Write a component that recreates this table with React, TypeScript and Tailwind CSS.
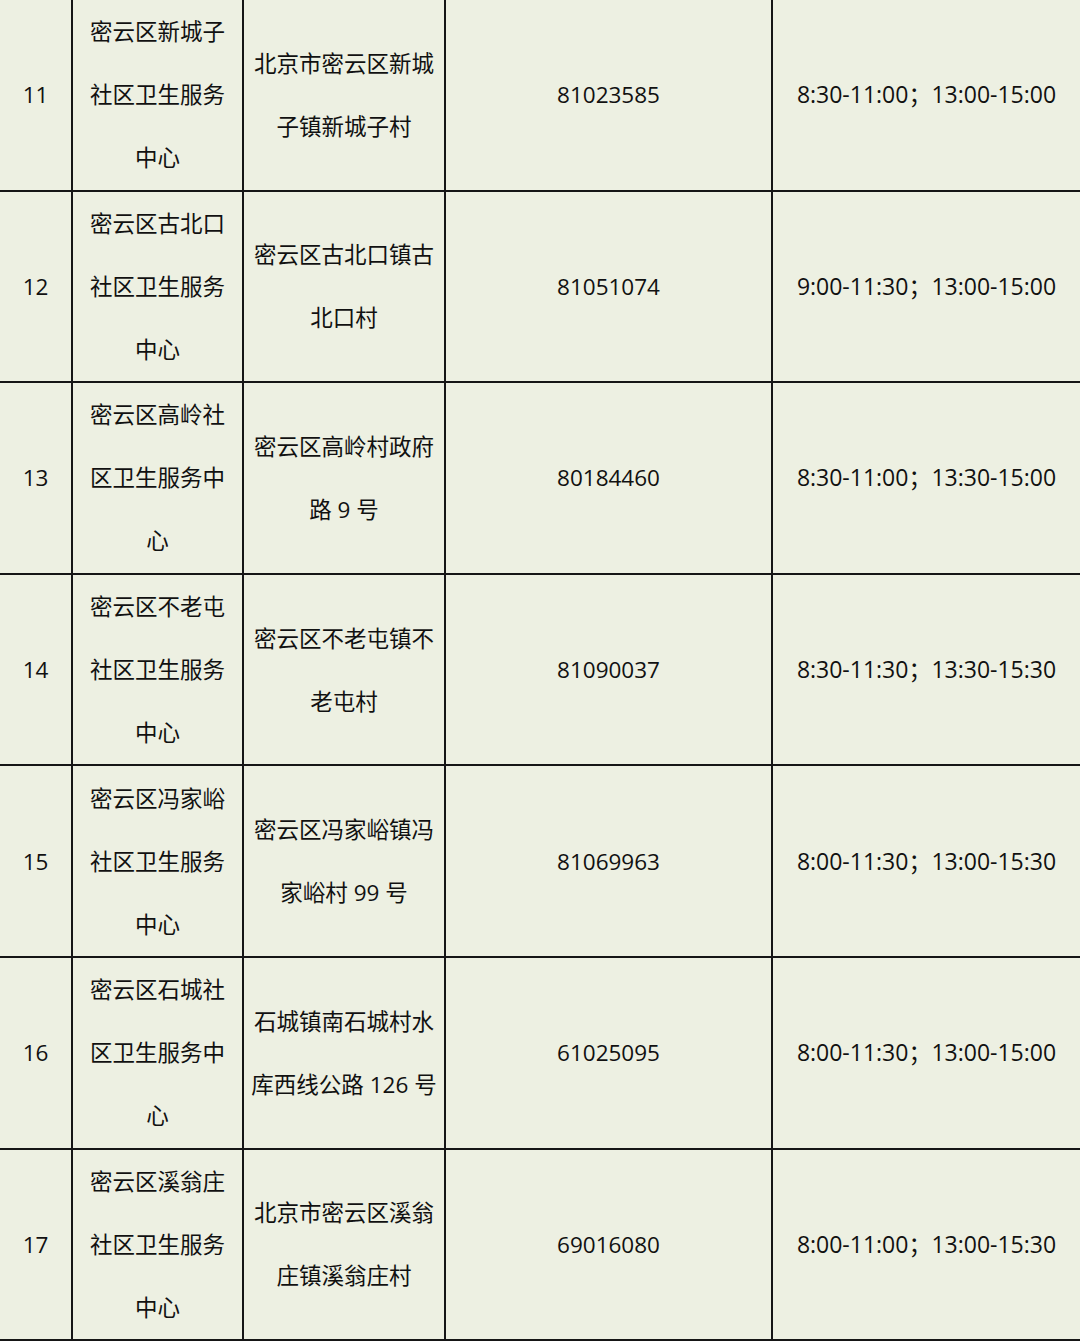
import React from "react";

type Row = {
    no: string;
    name: string[];
    addr: string[];
    phone: string;
    hours: string;
};

const rows: Row[] = [
    { no: "11", name: ["密云区新城子", "社区卫生服务", "中心"], addr: ["北京市密云区新城", "子镇新城子村"], phone: "81023585", hours: "8:30-11:00；13:00-15:00" },
    { no: "12", name: ["密云区古北口", "社区卫生服务", "中心"], addr: ["密云区古北口镇古", "北口村"], phone: "81051074", hours: "9:00-11:30；13:00-15:00" },
    { no: "13", name: ["密云区高岭社", "区卫生服务中", "心"], addr: ["密云区高岭村政府", "路 9 号"], phone: "80184460", hours: "8:30-11:00；13:30-15:00" },
    { no: "14", name: ["密云区不老屯", "社区卫生服务", "中心"], addr: ["密云区不老屯镇不", "老屯村"], phone: "81090037", hours: "8:30-11:30；13:30-15:30" },
    { no: "15", name: ["密云区冯家峪", "社区卫生服务", "中心"], addr: ["密云区冯家峪镇冯", "家峪村 99 号"], phone: "81069963", hours: "8:00-11:30；13:00-15:30" },
    { no: "16", name: ["密云区石城社", "区卫生服务中", "心"], addr: ["石城镇南石城村水", "库西线公路 126 号"], phone: "61025095", hours: "8:00-11:30；13:00-15:00" },
    { no: "17", name: ["密云区溪翁庄", "社区卫生服务", "中心"], addr: ["北京市密云区溪翁", "庄镇溪翁庄村"], phone: "69016080", hours: "8:00-11:00；13:00-15:30" },
];

const cell = "flex flex-col items-center justify-center text-center border-r-2 border-[#161616]";

export default function App() {
    return (
        <div
            className="w-[1080px] h-[1341px] overflow-hidden bg-[#edf0e2] text-[#111] text-[22.5px] leading-[63px]"
            style={{ fontFamily: '"Open Sans", "Noto Sans CJK SC", sans-serif' }}
        >
            {rows.map((r) => (
                <div
                    key={r.no}
                    className="grid grid-cols-[73px_171px_202px_327px_1fr] h-[191.6px] border-b-2 border-[#161616]"
                >
                    <div className={cell}>{r.no}</div>
                    <div className={cell}>
                        {r.name.map((l) => (
                            <div key={l} className="whitespace-nowrap">{l}</div>
                        ))}
                    </div>
                    <div className={cell}>
                        {r.addr.map((l) => (
                            <div key={l} className="whitespace-nowrap">{l}</div>
                        ))}
                    </div>
                    <div className={cell}>{r.phone}</div>
                    <div className="flex items-center justify-center whitespace-nowrap text-[23px]">
                        {r.hours}
                    </div>
                </div>
            ))}
        </div>
    );
}
